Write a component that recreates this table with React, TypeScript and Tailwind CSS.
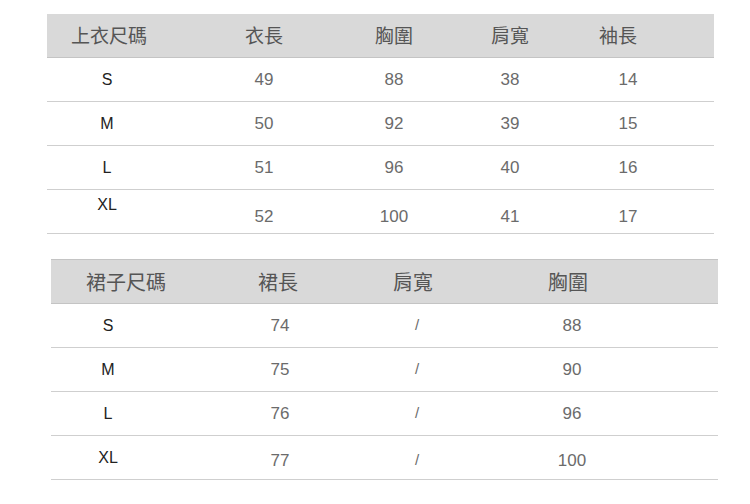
import React from "react"

const cjk = "font-['Noto_Sans_CJK_TC','Noto_Sans',sans-serif]"
const num = "font-['Liberation_Sans','Noto_Sans',sans-serif]"

const topRows = [
  ["S", "49", "88", "38", "14"],
  ["M", "50", "92", "39", "15"],
  ["L", "51", "96", "40", "16"],
  ["XL", "52", "100", "41", "17"],
]

const skirtRows = [
  ["S", "74", "/", "88"],
  ["M", "75", "/", "90"],
  ["L", "76", "/", "96"],
  ["XL", "77", "/", "100"],
]

const Cell: React.FC<{ children: React.ReactNode; className?: string }> = ({ children, className }) => (
  <div className={`flex justify-center items-center whitespace-nowrap ${className ?? ""}`}>{children}</div>
)

export default function App() {
  return (
    <div className="w-[750px] h-[504px] bg-white overflow-hidden">
      {/* 上衣 */}
      <div className="ml-[47px] mt-[14px] w-[667px]">
        <div className={`grid grid-cols-[120px_194px_66px_166px_66px_1fr] h-[44px] bg-[#d9d9d9] border-b border-[#c4c4c4] text-[19px] text-[#555] ${cjk}`}>
          <div className="flex items-center pl-[24px] whitespace-nowrap">上衣尺碼</div>
          <Cell>衣長</Cell>
          <Cell>胸圍</Cell>
          <Cell>肩寬</Cell>
          <Cell className="pr-[16px]">袖長</Cell>
          <div />
        </div>
        {topRows.map((r) => {
          const last = r[0] === "XL"
          const n = `text-[#6b6b6b] ${last ? "pt-[10px]" : ""}`
          return (
            <div
              key={r[0]}
              className={`grid grid-cols-[120px_194px_66px_166px_66px_1fr] h-[44px] border-b border-[#cfcfcf] text-[17px] ${num}`}
            >
              <Cell className={`text-[#222] text-[16px] ${last ? "pb-[14px]" : ""}`}>{r[0]}</Cell>
              <Cell className={n}>{r[1]}</Cell>
              <Cell className={n}>{r[2]}</Cell>
              <Cell className={n}>{r[3]}</Cell>
              <Cell className={`${n} pl-[4px]`}>{r[4]}</Cell>
              <div />
            </div>
          )
        })}
      </div>

      {/* 裙子 */}
      <div className="ml-[51px] mt-[25px] w-[667px]">
        <div className={`grid grid-cols-[114px_230px_40px_270px_1fr] h-[45px] bg-[#d9d9d9] border-y border-[#c4c4c4] text-[20px] text-[#555] ${cjk}`}>
          <div className="flex items-center pl-[35px] whitespace-nowrap">裙子尺碼</div>
          <Cell className="pr-[4px]">裙長</Cell>
          <Cell className="pr-[4px]">肩寬</Cell>
          <Cell className="pr-[4px]">胸圍</Cell>
          <div />
        </div>
        {skirtRows.map((r) => {
          const last = r[0] === "XL"
          const n = `text-[#6b6b6b] ${last ? "pt-[6px]" : ""}`
          return (
            <div
              key={r[0]}
              className={`grid grid-cols-[114px_230px_40px_270px_1fr] h-[44px] border-b border-[#cfcfcf] text-[17px] ${num}`}
            >
              <Cell className="text-[#222] text-[16px]">{r[0]}</Cell>
              <Cell className={n}>{r[1]}</Cell>
              <Cell className={`${n} pl-[4px] text-[15px] font-light`}>{r[2]}</Cell>
              <Cell className={`${n} pl-[4px]`}>{r[3]}</Cell>
              <div />
            </div>
          )
        })}
      </div>
    </div>
  )
}
